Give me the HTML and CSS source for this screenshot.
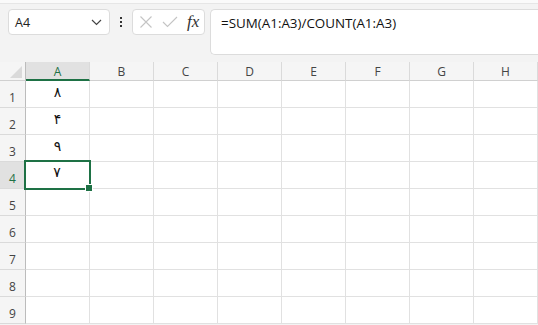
FILE: index.html
```html
<!DOCTYPE html>
<html>
<head>
<meta charset="utf-8">
<link rel="stylesheet" href="styles.css">
</head>
<body>
<div class="ribbon-edge"></div>
<div class="toolbar">
  <div class="namebox">
    <span class="name">A4</span>
    <svg class="chev" width="11" height="7" viewBox="0 0 11 7"><path d="M1 1 L5.5 5.5 L10 1" fill="none" stroke="#444" stroke-width="1.2"/></svg>
  </div>
  <div class="dots"><span></span><span></span><span></span></div>
  <div class="fxbox">
    <svg width="14" height="14" viewBox="0 0 14 14"><path d="M1.5 1.5 L12.5 12.5 M12.5 1.5 L1.5 12.5" stroke="#c4c4c4" stroke-width="1.1" fill="none"/></svg>
    <svg width="16" height="12" viewBox="0 0 16 12"><path d="M1 6 L5.5 10.5 L15 1" stroke="#c4c4c4" stroke-width="1.1" fill="none"/></svg>
    <span class="fx"><i>f</i><i>x</i></span>
  </div>
  <div class="formula">=SUM(A1:A3)/COUNT(A1:A3)</div>
</div>
<div class="sheet">
  <div class="corner"><div class="tri"></div></div>
  <div class="colh sel">A</div>
  <div class="colh">B</div>
  <div class="colh">C</div>
  <div class="colh">D</div>
  <div class="colh">E</div>
  <div class="colh">F</div>
  <div class="colh">G</div>
  <div class="colh">H</div>
  <div class="colh last"></div>

  <div class="rowh">1</div><div class="cell fa">۸</div><div class="cell"></div><div class="cell"></div><div class="cell"></div><div class="cell"></div><div class="cell"></div><div class="cell"></div><div class="cell"></div><div class="cell last"></div>
  <div class="rowh">2</div><div class="cell fa">۴</div><div class="cell"></div><div class="cell"></div><div class="cell"></div><div class="cell"></div><div class="cell"></div><div class="cell"></div><div class="cell"></div><div class="cell last"></div>
  <div class="rowh">3</div><div class="cell fa">۹</div><div class="cell"></div><div class="cell"></div><div class="cell"></div><div class="cell"></div><div class="cell"></div><div class="cell"></div><div class="cell"></div><div class="cell last"></div>
  <div class="rowh sel">4</div><div class="cell fa active">۷<span class="handle"></span></div><div class="cell"></div><div class="cell"></div><div class="cell"></div><div class="cell"></div><div class="cell"></div><div class="cell"></div><div class="cell"></div><div class="cell last"></div>
  <div class="rowh">5</div><div class="cell"></div><div class="cell"></div><div class="cell"></div><div class="cell"></div><div class="cell"></div><div class="cell"></div><div class="cell"></div><div class="cell"></div><div class="cell last"></div>
  <div class="rowh">6</div><div class="cell"></div><div class="cell"></div><div class="cell"></div><div class="cell"></div><div class="cell"></div><div class="cell"></div><div class="cell"></div><div class="cell"></div><div class="cell last"></div>
  <div class="rowh">7</div><div class="cell"></div><div class="cell"></div><div class="cell"></div><div class="cell"></div><div class="cell"></div><div class="cell"></div><div class="cell"></div><div class="cell"></div><div class="cell last"></div>
  <div class="rowh">8</div><div class="cell"></div><div class="cell"></div><div class="cell"></div><div class="cell"></div><div class="cell"></div><div class="cell"></div><div class="cell"></div><div class="cell"></div><div class="cell last"></div>
  <div class="rowh">9</div><div class="cell"></div><div class="cell"></div><div class="cell"></div><div class="cell"></div><div class="cell"></div><div class="cell"></div><div class="cell"></div><div class="cell"></div><div class="cell last"></div>
</div>
</body>
</html>
```

FILE: styles.css
```css
* { box-sizing: border-box; }
html, body { margin: 0; padding: 0; }
body {
  width: 538px;
  height: 325px;
  overflow: hidden;
  background: #f3f3f3;
  font-family: "Open Sans", "Noto Sans", "DejaVu Sans", sans-serif;
  color: #222;
}
.ribbon-edge {
  height: 4px;
  background: #fafafa;
  border-bottom: 1px solid #e6e6e6;
}
.toolbar {
  height: 58px;
  display: flex;
  align-items: flex-start;
  padding-top: 5px;
  padding-left: 8px;
}
.namebox {
  width: 102px;
  height: 26px;
  background: #fff;
  border: 1px solid #dcdcdc;
  border-radius: 4px;
  display: flex;
  align-items: center;
  justify-content: space-between;
  padding: 0 7px 0 6px;
  font-size: 12.5px;
  color: #222;
}
.chev { margin-top: 1px; }
.dots {
  width: 22px;
  height: 26px;
  display: flex;
  flex-direction: column;
  align-items: center;
  justify-content: center;
  gap: 2px;
}
.dots span {
  width: 2px;
  height: 2px;
  background: #333;
}
.fxbox {
  width: 73px;
  height: 26px;
  background: #fff;
  border: 1px solid #dcdcdc;
  border-radius: 4px;
  display: flex;
  align-items: center;
  padding: 0 4px 0 6px;
  gap: 9px;
}
.fx {
  font-family: "Liberation Serif", "DejaVu Serif", serif;
  font-size: 17px;
  color: #333;
}
.fx i { font-style: italic; }
.formula {
  flex: 1;
  margin-left: 5px;
  height: 46px;
  background: #fff;
  border: 1px solid #dcdcdc;
  border-right: none;
  border-radius: 5px 0 0 5px;
  padding: 4px 0 0 10px;
  font-size: 13.4px;
  color: #111;
}
.sheet {
  display: grid;
  grid-template-columns: 26px repeat(8, 64px) 1fr;
  grid-template-rows: 19px repeat(9, 27px);
  background: #fff;
}
.corner {
  background: #f5f5f5;
  border-right: 1px solid #bcbcbc;
  border-bottom: 1px solid #d0d0d0;
  position: relative;
}
.tri {
  position: absolute;
  right: 3px;
  bottom: 2px;
  width: 0;
  height: 0;
  border-left: 12px solid transparent;
  border-bottom: 12px solid #dadada;
}
.colh {
  background: #f5f5f5;
  border-right: 1px solid #dadada;
  border-bottom: 1px solid #d0d0d0;
  font-size: 12px;
  color: #444;
  display: flex;
  align-items: center;
  justify-content: center;
  padding-top: 1px;
}
.colh.sel {
  background: #e1e1e1;
  color: #1f7145;
  border-bottom: 2px solid #1e7145;
}
.colh.last { border-right: none; }
.rowh {
  background: #f5f5f5;
  border-right: 1px solid #bcbcbc;
  border-bottom: 1px solid #dadada;
  font-size: 12px;
  color: #444;
  display: flex;
  align-items: flex-end;
  justify-content: center;
  padding-bottom: 1px;
}
.rowh.sel {
  background: #e1e1e1;
  color: #1f7145;
}
.cell {
  border-right: 1px solid #e1e1e1;
  border-bottom: 1px solid #e1e1e1;
}
.cell.last { border-right: none; }
.fa {
  font-family: "DejaVu Sans", sans-serif;
  font-size: 14px;
  font-weight: normal;
  color: #111;
  text-align: center;
  line-height: 20px;
  padding-top: 1px;
}
.active {
  position: relative;
  outline: 2px solid #1e7145;
  outline-offset: -1px;
  margin-left: -1px;
  margin-top: -1px;
  z-index: 1;
}
.handle {
  position: absolute;
  right: -4px;
  bottom: -4px;
  width: 6px;
  height: 6px;
  background: #1e7145;
  border: 1px solid #fff;
  box-sizing: content-box;
}
```
